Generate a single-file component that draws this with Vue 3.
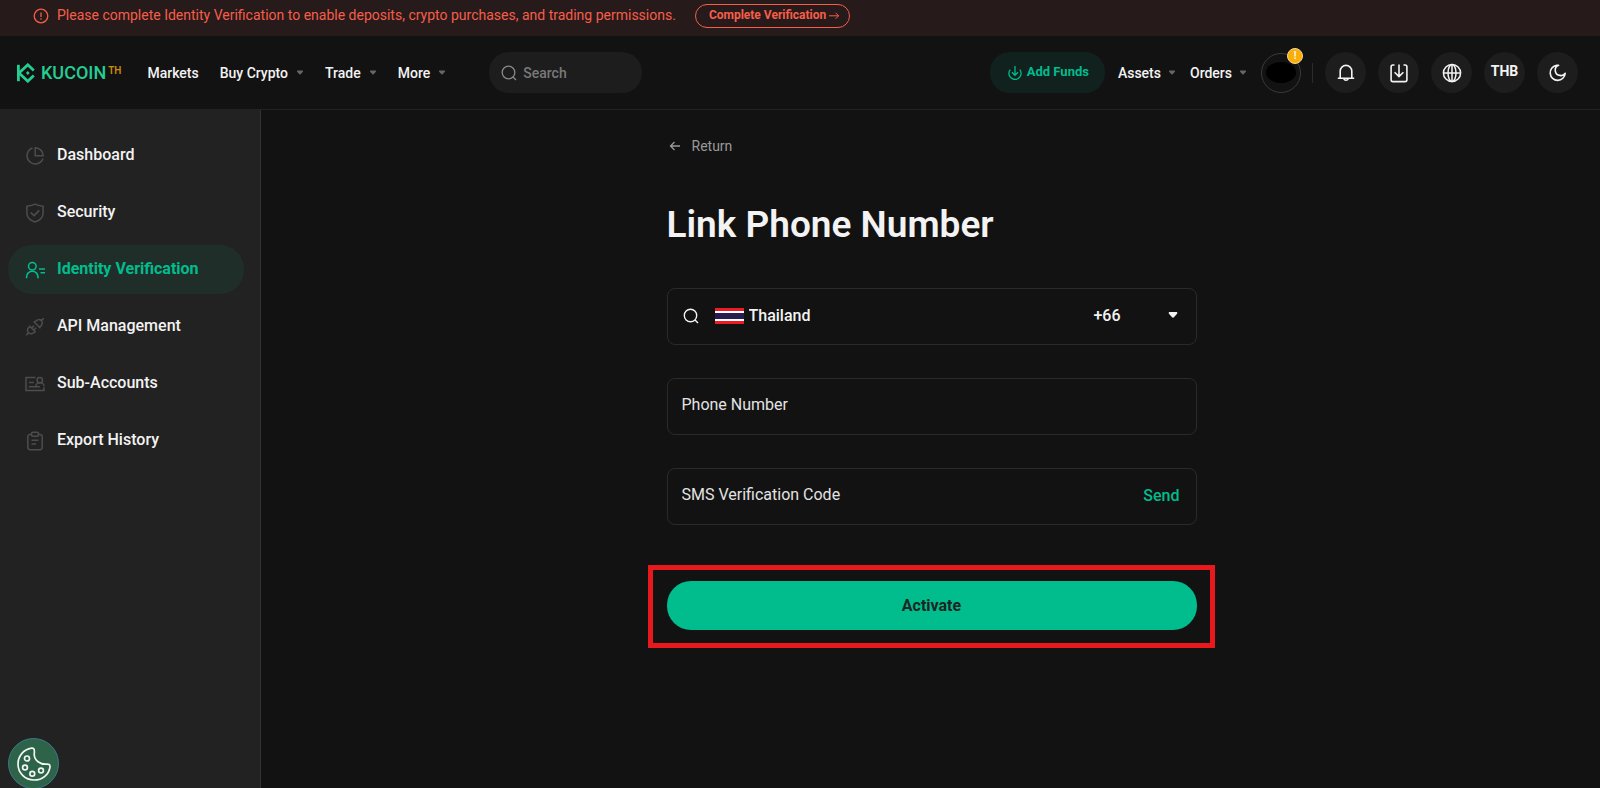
<script setup>
import { ref } from 'vue'

const leftNav = [
  { label: 'Markets', menu: false },
  { label: 'Buy Crypto', menu: true },
  { label: 'Trade', menu: true },
  { label: 'More', menu: true }
]
const rightNav = ['Assets', 'Orders']
const sideItems = [
  { label: 'Dashboard', icon: 'dashboard' },
  { label: 'Security', icon: 'security' },
  { label: 'Identity Verification', icon: 'identity', active: true },
  { label: 'API Management', icon: 'api' },
  { label: 'Sub-Accounts', icon: 'accounts' },
  { label: 'Export History', icon: 'export' }
]
const search = ref('')
const country = ref('Thailand')
const phone = ref('')
const code = ref('')
</script>

<template>
  <div class="page">
    <div class="banner" role="alert">
      <svg class="banner-icon" viewBox="0 0 16 16" width="16" height="16" aria-hidden="true">
        <circle cx="8" cy="8" r="6.8" fill="none" stroke="currentColor" stroke-width="1.3" />
        <path d="M8 4.4v4.6M8 10.3v1.4" stroke="currentColor" stroke-width="1.3" />
      </svg>
      <span class="banner-text">Please complete Identity Verification to enable deposits, crypto purchases, and trading permissions.</span>
      <button type="button" class="banner-button">
        <span>Complete Verification</span>
        <svg viewBox="0 0 12 10" width="12" height="10" aria-hidden="true">
          <path d="M1 5.8h9.6M7.6 2.8l3 3-3 3" fill="none" stroke="currentColor" stroke-width="1" />
        </svg>
      </button>
    </div>

    <header class="header">
      <a href="#" class="logo">
        <svg viewBox="0 0 20 20" width="20" height="20" aria-hidden="true">
          <g fill="none" stroke="#24ce93" stroke-width="2.8">
            <path d="M2.400 1.800v16.400" />
            <path d="M3 10L11.800 1.800L17.800 7.500" />
            <path d="M3 10L11.800 18.200L17.800 12.500" />
          </g>
          <path d="M11.800 8.100L13.700 10L11.800 11.900L9.900 10z" fill="#24ce93" />
        </svg>
        <span class="logo-name">KUCOIN</span><span class="logo-region">TH</span>
      </a>
      <nav class="nav">
        <a v-for="item in leftNav" :key="item.label" href="#" class="nav-link">
          {{ item.label }}
          <svg v-if="item.menu" class="caret" viewBox="0 0 8 5" width="8" height="5" aria-hidden="true">
            <path d="M1.400 0.500h5.200q1 0.500 0.300 1.300L4.600 4.200q-0.600 0.500-1.200 0L1.100 1.800q-0.700-0.800 0.300-1.300z" fill="currentColor" />
          </svg>
        </a>
      </nav>
      <label class="search">
        <svg viewBox="0 0 16 16" width="16" height="16" aria-hidden="true">
          <circle cx="7.500" cy="7.500" r="6.300" fill="none" stroke="currentColor" stroke-width="1.300" />
          <path d="M12 12l3 3" stroke="currentColor" stroke-width="1.300" />
        </svg>
        <input v-model="search" type="text" placeholder="Search" aria-label="Search" />
      </label>

      <div class="right">
        <button type="button" class="add-funds">
          <svg viewBox="0 0 14 14" width="14" height="14" aria-hidden="true">
            <path d="M2.200 3.600A6.100 6.100 0 1 0 11.800 3.600M7 0v9.300M3.900 6.200l3.100 3.100 3.100-3.100" fill="none" stroke="currentColor" stroke-width="1.300" />
          </svg>
          <span>Add Funds</span>
        </button>
        <nav class="account-nav">
          <a v-for="label in rightNav" :key="label" href="#" class="nav-link">
            {{ label }}
            <svg class="caret" viewBox="0 0 8 5" width="8" height="5" aria-hidden="true">
              <path d="M1.400 0.500h5.200q1 0.500 0.300 1.300L4.600 4.200q-0.600 0.500-1.200 0L1.100 1.800q-0.700-0.800 0.300-1.300z" fill="currentColor" />
            </svg>
          </a>
        </nav>
        <button type="button" class="avatar" aria-label="Account">
          <span class="avatar-name"></span>
          <span class="badge">!</span>
        </button>
        <span class="divider"></span>
        <div class="tools">
          <button type="button" class="tool" aria-label="Notifications">
            <svg viewBox="0 0 20 20" width="20" height="20" aria-hidden="true">
              <path d="M1.800 15.200h16.400M4.200 15.200V8.200a5.800 5.800 0 0 1 11.600 0v7M7.800 15.800a2.300 2 0 0 0 4.400 0" fill="none" stroke="currentColor" stroke-width="1.600" />
            </svg>
          </button>
          <button type="button" class="tool" aria-label="Download">
            <svg viewBox="0 0 20 20" width="20" height="20" aria-hidden="true">
              <path d="M5.500 2H3.900A1.800 1.800 0 0 0 2.100 3.800v13a1.800 1.800 0 0 0 1.800 1.800h12.200a1.800 1.800 0 0 0 1.800-1.800v-13A1.800 1.800 0 0 0 16.100 2H14.500M10 1.500v12M5.600 9.200l4.400 4.400 4.400-4.400" fill="none" stroke="currentColor" stroke-width="1.600" />
            </svg>
          </button>
          <button type="button" class="tool" aria-label="Language">
            <svg viewBox="0 0 20 20" width="20" height="20" aria-hidden="true">
              <g fill="none" stroke="currentColor" stroke-width="1.500">
                <circle cx="10" cy="10" r="8.600" />
                <ellipse cx="10" cy="10" rx="4" ry="8.600" />
                <path d="M1.400 10h17.200M10 1.400v17.200" />
              </g>
            </svg>
          </button>
          <button type="button" class="tool currency">THB</button>
          <button type="button" class="tool" aria-label="Dark theme">
            <svg viewBox="0 0 20 20" width="20" height="20" aria-hidden="true">
              <path d="M8.700 2.400A7.500 7.500 0 1 0 17.200 10.300A5 5 0 0 1 11.900 12.400A5.300 5.300 0 0 1 10.600 2.200z" fill="none" stroke="currentColor" stroke-width="1.600" stroke-linejoin="round" />
            </svg>
          </button>
        </div>
      </div>
    </header>

    <div class="body">
      <aside class="sidebar">
        <a v-for="item in sideItems" :key="item.label" href="#" class="side-link" :class="{ active: item.active }">
          <svg viewBox="0 0 20 20" width="20" height="20" fill="none" stroke="currentColor" stroke-width="1.500" aria-hidden="true">
            <template v-if="item.icon === 'dashboard'">
              <path d="M7.500 2A8.200 8.200 0 1 0 18 12.500" />
              <path d="M10.200 1.800v8h8A8 8 0 0 0 10.200 1.800z" />
            </template>
            <template v-else-if="item.icon === 'security'">
              <path d="M10 1.200C7.500 2.500 4.500 3 1.900 3.300V10c0 4.500 3.500 7.500 8.100 9 4.600-1.500 8.100-4.500 8.100-9V3.300C15.500 3 12.500 2.500 10 1.200z" stroke-linejoin="round" />
              <path d="M5.800 9.600l3.300 3 5.200-5.300" stroke-width="1.700" />
            </template>
            <template v-else-if="item.icon === 'identity'">
              <circle cx="7.300" cy="6.300" r="3.800" />
              <path d="M1.600 18.200v-1.400a5.700 5.500 0 0 1 11.400 0v1.400M14 9h6M15.500 12.800H20" stroke-width="1.600" />
            </template>
            <template v-else-if="item.icon === 'api'">
              <path d="M4.200 8.700l6.600 6.600M4.900 9.400C1.800 12 2 14 3.400 15.600 5.200 17.500 7.500 17.300 10 14.500M1.200 18.200l2.200-2.300M6.800 10.900l2.200-2.200M8.900 13l2.200-2.200M8.700 4.500l6.800 6.800M9.600 5.200C12 2.200 14.500 2 16.300 3.600 18 5.300 17.600 7.800 14.700 10.300M16.300 3.600l2.400-2.300" />
            </template>
            <template v-else-if="item.icon === 'accounts'">
              <path d="M10.500 3.500H1v13h18v-3.200M3.800 8.400h5M3.800 12.700h11" />
              <circle cx="14.800" cy="6.200" r="2.700" />
              <path d="M11 12.200a4 3.600 0 0 1 8 0" />
            </template>
            <template v-else>
              <path d="M6.500 3.500H5a2.200 2.200 0 0 0-2.200 2.200v10.800A2.200 2.200 0 0 0 5 18.700h10a2.200 2.200 0 0 0 2.200-2.200V5.700A2.200 2.200 0 0 0 15 3.500h-1.500" />
              <rect x="6.500" y="1.300" width="7" height="4" rx="1.500" />
              <path d="M6.500 9.300h7M6.500 13h4.500" />
            </template>
          </svg>
          <span>{{ item.label }}</span>
        </a>
      </aside>

      <main class="main">
        <form class="form" @submit.prevent>
          <a href="#" class="return">
            <svg viewBox="0 0 12 12" width="12" height="12" aria-hidden="true">
              <path d="M11 6H1.500M5.500 2l-4 4 4 4" fill="none" stroke="currentColor" stroke-width="1.300" />
            </svg>
            <span>Return</span>
          </a>
          <h1>Link Phone Number</h1>

          <div class="field country">
            <svg class="field-search" viewBox="0 0 16 16" width="16" height="16" aria-hidden="true">
              <circle cx="7.500" cy="7.500" r="6.200" fill="none" stroke="currentColor" stroke-width="1.400" />
              <path d="M12 12l3 3" stroke="currentColor" stroke-width="1.400" />
            </svg>
            <svg class="flag" viewBox="0 0 29 16" width="29" height="16" aria-hidden="true">
              <rect width="29" height="16" fill="#ed1c24" />
              <rect y="3" width="29" height="10" fill="#fff" />
              <rect y="5" width="29" height="6" fill="#241d4f" />
            </svg>
            <select v-model="country" aria-label="Country">
              <option>Thailand</option>
            </select>
            <span class="dial">+66</span>
            <svg class="field-caret" viewBox="0 0 10 6" width="10" height="6" aria-hidden="true">
              <path d="M1.200 0h7.600q0.900 0.800 0.200 1.700L6 5.200q-1 0.900-2 0L1 1.700Q0.300 0.800 1.200 0z" fill="currentColor" />
            </svg>
          </div>

          <div class="field">
            <input v-model="phone" type="tel" placeholder="Phone Number" aria-label="Phone Number" />
          </div>

          <div class="field">
            <input v-model="code" type="text" placeholder="SMS Verification Code" aria-label="SMS Verification Code" />
            <button type="button" class="send">Send</button>
          </div>

          <div class="highlight">
            <button type="submit" class="activate">Activate</button>
          </div>
        </form>
      </main>
    </div>

    <button type="button" class="cookie" aria-label="Cookie settings">
      <svg viewBox="0 0 34 34" width="34" height="34" aria-hidden="true">
        <g fill="none" stroke="#f1f6f2" stroke-width="1.700" stroke-linejoin="round">
          <path d="M14.500 1.200C6.500 2.500 1 9 1 17C1 26 8 33 17 33C25.500 33 32 27.500 33 19.800C33.200 17.500 31.500 17 29.500 17.200C23 17.500 17.500 13.500 17.200 7.500C17.300 5.500 18 2.500 16.500 1.500C16 1.100 15.200 1.100 14.500 1.200z" />
          <circle cx="10" cy="11.500" r="2.500" />
          <circle cx="8" cy="20.500" r="2.400" />
          <circle cx="15.300" cy="26.800" r="2.400" />
          <circle cx="24" cy="23.500" r="2.400" />
        </g>
      </svg>
    </button>
  </div>
</template>

<style>
body {
  margin: 0;
  background: #121212;
}
</style>

<style scoped>
.page {
  display: flex;
  flex-direction: column;
  min-height: 100vh;
  box-sizing: border-box;
  background: #121212;
  color: #f3f3f3;
  font-family: Roboto, "Liberation Sans", sans-serif;
  font-size: 14px;
}
button,
input,
select {
  font: inherit;
  color: inherit;
  background: none;
  border: 0;
  padding: 0;
  margin: 0;
}
button {
  cursor: pointer;
}
input,
select {
  outline: none;
  min-width: 0;
  appearance: none;
}
a {
  color: inherit;
  text-decoration: none;
}
svg {
  flex: none;
}
.banner {
  display: flex;
  align-items: center;
  padding: 4px 33px 8px;
  background: #261a1a;
  color: #f65e4a;
}
.banner-text {
  margin: 0 19px 0 8px;
  padding-bottom: 2px;
  line-height: 20px;
}
.banner-button {
  display: flex;
  align-items: center;
  gap: 2px;
  height: 24px;
  padding: 0 9px 2px 13px;
  border: 1px solid #f65e4a;
  border-radius: 12px;
  font-size: 12px;
  font-weight: 700;
}
.header {
  display: flex;
  align-items: center;
  height: 73px;
  padding: 0 22px 0 16px;
  border-bottom: 1px solid #222;
}
.logo {
  display: flex;
  align-items: center;
  color: #24ce93;
}
.logo-name {
  margin: 0 2px 0 5px;
  font-size: 18px;
  font-weight: 500;
}
.logo-region {
  align-self: flex-start;
  color: #c98b0b;
  font-size: 10px;
  font-weight: 600;
  line-height: 18px;
}
.nav {
  display: flex;
  gap: 21px;
  margin-left: 26px;
}
.account-nav {
  display: flex;
  gap: 14px;
  margin-left: 13px;
}
.nav-link {
  display: flex;
  align-items: center;
  gap: 8px;
  font-weight: 500;
  line-height: 20px;
}
.account-nav .nav-link {
  gap: 7px;
}
.caret {
  color: #666;
}
.search {
  display: flex;
  align-items: center;
  gap: 6px;
  box-sizing: border-box;
  width: 153px;
  height: 41px;
  margin-left: 43px;
  padding: 0 12px;
  border-radius: 20px;
  background: #1d1d1d;
  color: #8a8a8a;
}
.search input {
  width: 100%;
  font-weight: 500;
}
.search input::placeholder {
  color: #797979;
  opacity: 1;
}
.right {
  display: flex;
  align-items: center;
  margin-left: auto;
}
.add-funds {
  display: flex;
  align-items: center;
  gap: 5px;
  height: 41px;
  padding: 0 16px 0 18px;
  border-radius: 20px;
  background: #11211d;
  color: #01bc8d;
  font-size: 13px;
  font-weight: 700;
}
.add-funds span {
  padding-bottom: 2px;
}
.avatar {
  position: relative;
  display: flex;
  align-items: center;
  justify-content: center;
  width: 40px;
  height: 40px;
  margin-left: 14px;
  border: 1px solid #3a3a3a;
  border-radius: 50%;
}
.avatar-name {
  width: 30px;
  height: 21px;
  border-radius: 50%;
  background: #000;
}
.badge {
  position: absolute;
  top: -6px;
  right: -3px;
  box-sizing: border-box;
  width: 16px;
  height: 16px;
  border: 1px solid #f5d9a0;
  border-radius: 50%;
  background: #fbae05;
  color: #fff;
  font-size: 10px;
  font-weight: 700;
  line-height: 14px;
  text-align: center;
}
.divider {
  width: 1px;
  height: 20px;
  margin: 0 12px 0 11px;
  background: #2b2b2b;
}
.tools {
  display: flex;
  gap: 12px;
}
.tool {
  display: flex;
  align-items: center;
  justify-content: center;
  width: 41px;
  height: 41px;
  border-radius: 50%;
  background: #1d1d1d;
}
.currency {
  padding-bottom: 3px;
  font-weight: 700;
}
.body {
  display: flex;
  flex: 1;
}
.sidebar {
  display: flex;
  flex-direction: column;
  gap: 8px;
  box-sizing: border-box;
  width: 261px;
  padding: 21px 16px 21px 8px;
  border-right: 1px solid #333;
  background: #222;
}
.side-link {
  display: flex;
  align-items: center;
  gap: 12px;
  height: 49px;
  padding: 0 17px;
  border-radius: 24px;
  font-size: 16px;
  font-weight: 500;
}
.side-link span {
  padding-bottom: 2px;
}
.side-link svg {
  color: #4d4d4d;
}
.side-link.active,
.side-link.active svg {
  color: #01bc8d;
}
.side-link.active {
  background: #202e2a;
  font-weight: 700;
}
.main {
  flex: 1;
  display: flex;
  justify-content: center;
  padding: 26px 16px 26px 18px;
}
.form {
  display: flex;
  flex-direction: column;
  flex: 0 1 530px;
}
.return {
  display: flex;
  align-items: center;
  gap: 11px;
  align-self: flex-start;
  padding-left: 2px;
  color: #999;
  line-height: 20px;
}
h1 {
  margin: 44px 0 38px;
  font-size: 37px;
  font-weight: 600;
  line-height: 50px;
}
.field {
  display: flex;
  align-items: center;
  box-sizing: border-box;
  height: 57px;
  margin-bottom: 33px;
  padding: 0 16px 0 14px;
  border: 1px solid #2a2a2a;
  border-radius: 8px;
  font-size: 16px;
}
.field input {
  flex: 1;
  height: 52px;
  padding-bottom: 5px;
  box-sizing: border-box;
}
.field input::placeholder {
  color: #e3e3e3;
  opacity: 1;
}
.country {
  padding: 0 18px 2px 15px;
  font-weight: 500;
}
.flag {
  margin: 0 5px 0 16px;
}
.country select {
  flex: 1;
}
.dial {
  margin-right: 47px;
}
.field-caret {
  margin-bottom: 2px;
}
.send {
  padding-bottom: 2px;
  color: #01bc8d;
  font-weight: 500;
}
.highlight {
  margin: 7px -18px 0 -19px;
  padding: 11px 13px 13px 14px;
  border: 5px solid #e8191c;
}
.activate {
  display: block;
  width: 100%;
  height: 49px;
  border-radius: 24px;
  background: #01bc8d;
  color: #1d2623;
  font-size: 16px;
  font-weight: 700;
}
.cookie {
  position: fixed;
  left: 8px;
  bottom: -1px;
  display: flex;
  align-items: center;
  justify-content: center;
  box-sizing: border-box;
  width: 51px;
  height: 51px;
  border: 1px solid #41798a;
  border-radius: 50%;
  background: #2d6348;
}
</style>
